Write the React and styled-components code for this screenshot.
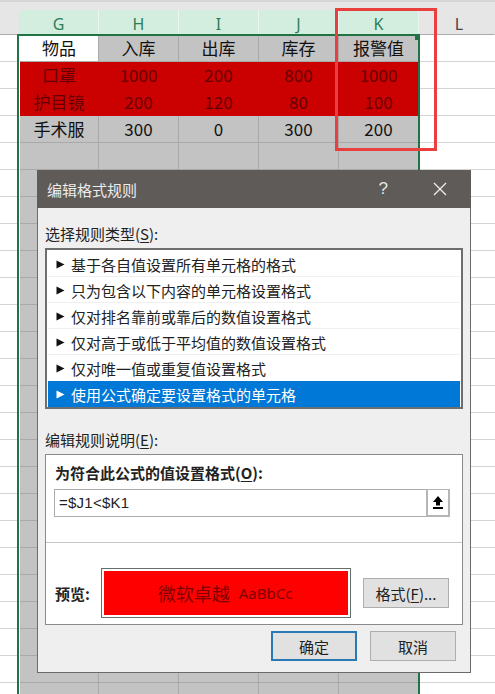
import React from 'react';
import styled, { createGlobalStyle } from 'styled-components';

const Global = createGlobalStyle`
  html, body { margin: 0; padding: 0; background: #fff; overflow: hidden; }
  #root { width: 495px; height: 694px; }
  * { box-sizing: border-box; }
`;
const FONT = `"Noto Sans CJK SC", "Noto Sans", sans-serif`;

const Page = styled.div`
  position: relative; width: 495px; height: 694px; overflow: hidden;
  font-family: ${FONT}; color: #111; background: #fff;
`;
const Sheet = styled.div`
  display: grid;
  grid-template-columns: 19px repeat(5, 80px) 1fr;
  grid-template-rows: 10px 25px;
  grid-auto-rows: 27px;
`;
const TopStrip = styled.div`
  grid-column: 1 / -1; background: #e6e6e6; border-top: 2px solid #d6d6d6;
`;
const HeaderCell = styled.div`
  display: flex; align-items: center; justify-content: center;
  padding-top: 3px; padding-left: ${p => (p.$last ? '5px' : '0')};
  font: 16px / 1 "Noto Sans", sans-serif;
  color: ${p => (p.$on ? '#2f7d56' : '#444')};
  background: ${p => (p.$on ? '#d3eedf' : '#e6e6e6')};
  border-bottom: 1px solid ${p => (p.$on ? '#217346' : '#ababab')};
  border-right: 1px solid ${p => (p.$on ? '#eaf5ef' : '#e6e6e6')};
`;
const Gutter = styled.div`
  background: #fff; border-bottom: 1px solid #d4d4d4;
`;
const Cell = styled.div`
  display: flex; align-items: center; justify-content: center;
  font-size: 17px; line-height: 1; padding-bottom: 2px;
  color: ${p => (p.$alert ? '#660000' : '#111')};
  background: ${p => (p.$alert ? '#cb0000' : p.$active ? '#fff' : '#c3c3c3')};
  border-right: 1px solid ${p => (p.$alert ? '#cb0000' : '#a9a9a9')};
  border-bottom: 1px solid ${p => (p.$alert ? '#cb0000' : '#a9a9a9')};
  ${p => p.$first && 'margin-left: 1px;'}
`;
const Blank = styled.div`
  background: #fff; border-bottom: 1px solid #d4d4d4;
`;

const Selection = styled.div`
  position: absolute; left: 17px; top: 34px; width: 403px; height: 680px;
  border: 2px solid #217346; pointer-events: none;
`;
const Handle = styled.div`
  position: absolute; right: -2px; top: -1px; width: 5px; height: 5px;
  background: #217346; border: 1px solid #217346;
`;
const Callout = styled.div`
  position: absolute; left: 335px; top: 8px; width: 102px; height: 143px;
  border: 3px solid #e9403f; pointer-events: none;
`;

const Dialog = styled.section`
  position: absolute; left: 37px; top: 170px; width: 434px; height: 503px;
  background: #efefef; border: 1px solid #6a6a6a; border-top: 0;
  display: flex; flex-direction: column;
`;
const TitleBar = styled.header`
  height: 38px; margin: 0 -1px; background: #5f5b58; color: #ececec;
  display: flex; align-items: center; padding: 0 24px 0 10px; font-size: 15px;
`;
const TitleText = styled.span` flex: 1; `;
const HelpMark = styled.span`
  font: 17px "Liberation Sans", sans-serif; margin-right: 45px; color: #e6e6e6;
`;
const Body = styled.div`
  display: flex; flex-direction: column; padding: 16px 7px 0;
`;
const Label = styled.div`
  font-size: 15px; line-height: 20px; color: #222; height: 20px;
  u { text-underline-offset: 2px; }
`;
const RuleList = styled.ul`
  list-style: none; margin: 4px 0 0; padding: 1px; width: 418px; height: 161px;
  background: #fff; border: 2px solid #6e6e6e;
`;
const Rule = styled.li`
  height: 26px; display: flex; align-items: center; padding: 1px 0 0 8px; gap: 6px;
  font-size: 15px; color: ${p => (p.$on ? '#fff' : '#222')};
  background: ${p => (p.$on ? '#0078d7' : '#fff')};
  border-bottom: 1px solid ${p => (p.$on ? '#0078d7' : '#f0f0f0')};
  &:nth-child(5) { border-bottom: 0; }
`;
const Arrow = styled.svg` width: 9px; height: 9px; flex: none; `;
const EditLabel = styled(Label)` margin-top: 21px; `;
const Panel = styled.div`
  margin-top: 4px; width: 418px; height: 171px; background: #fff;
  border: 1px solid #8a8a8a; display: flex; flex-direction: column;
`;
const PanelHead = styled.div`
  font-size: 15px; font-weight: 700; line-height: 20px; padding: 8px 0 0 9px; color: #222;
  u { text-underline-offset: 2px; }
`;
const FormulaRow = styled.div`
  margin: 6px 0 0 8px; width: 396px; height: 28px; display: flex;
  border: 1px solid #ababab;
`;
const FormulaText = styled.div`
  flex: 1; font: 15px "Liberation Sans", sans-serif; line-height: 25px; padding-left: 4px;
  color: #222; letter-spacing: 0.25px;
`;
const PickButton = styled.div`
  width: 24px; margin: -1px -1px -1px 0; border: 2px solid #b5b5b5; border-top-width: 1px;
  display: flex; align-items: center; justify-content: center; background: #fff;
`;
const Divider = styled.hr`
  margin: 25px 0 0; border: 0; border-top: 1px solid #c6c6c6; width: 100%;
`;
const PreviewRow = styled.div`
  display: flex; align-items: center; padding: 25px 0 0 9px;
`;
const PreviewLabel = styled.div`
  font-size: 15px; font-weight: 700; width: 46px; flex: none; color: #222;
`;
const PreviewBox = styled.div`
  width: 250px; height: 50px; flex: none; border: 1px solid #63706a; padding: 2px; background: #fff;
`;
const PreviewFill = styled.div`
  height: 100%; background: #ff0000; color: #800000;
  display: flex; align-items: center; justify-content: center; gap: 9px;
  font-size: 18px; padding-right: 2px;
`;
const PreviewLatin = styled.span` font-family: "Noto Sans", sans-serif; font-size: 15px; `;
const Btn = styled.button`
  width: 86px; height: 30px; padding: 0; flex: none; font-family: ${FONT}; font-size: 15px; color: #222;
  background: #e1e1e1; border: ${p => (p.$primary ? '2px solid #2a78b4' : '1px solid #adadad')};
  u { text-underline-offset: 2px; }
`;
const FormatBtn = styled(Btn)` margin-left: 12px; `;
const Footer = styled.div`
  display: flex; justify-content: flex-end; gap: 13px; padding: 6px 7px 0 0; width: 418px; margin-left: 7px;
`;

const cols = ['G', 'H', 'I', 'J', 'K'];
const rows = [
  { v: ['物品', '入库', '出库', '库存', '报警值'] },
  { v: ['口罩', '1000', '200', '800', '1000'], alert: true },
  { v: ['护目镜', '200', '120', '80', '100'], alert: true },
  { v: ['手术服', '300', '0', '300', '200'] },
  ...Array.from({ length: 22 }, () => ({ v: ['', '', '', '', ''] })),
];
const rules = [
  '基于各自值设置所有单元格的格式',
  '只为包含以下内容的单元格设置格式',
  '仅对排名靠前或靠后的数值设置格式',
  '仅对高于或低于平均值的数值设置格式',
  '仅对唯一值或重复值设置格式',
  '使用公式确定要设置格式的单元格',
];

export default function App() {
  return (
    <Page>
      <Global />
      <Sheet>
        <TopStrip />
        <HeaderCell />
        {cols.map(c => <HeaderCell key={c} $on>{c}</HeaderCell>)}
        <HeaderCell $last>L</HeaderCell>
        {rows.map((r, i) => (
          <React.Fragment key={i}>
            <Gutter />
            {r.v.map((t, j) => (
              <Cell key={j} $alert={r.alert} $first={j === 0} $active={i === 0 && j === 0}>{t}</Cell>
            ))}
            <Blank />
          </React.Fragment>
        ))}
      </Sheet>
      <Selection><Handle /></Selection>
      <Callout />
      <Dialog>
        <TitleBar>
          <TitleText>编辑格式规则</TitleText>
          <HelpMark>?</HelpMark>
          <svg width="14" height="14" viewBox="0 0 14 14" aria-hidden="true">
            <path d="M1 1 13 13M13 1 1 13" stroke="#ececec" strokeWidth="1.4" fill="none" />
          </svg>
        </TitleBar>
        <Body>
          <Label>选择规则类型(<u>S</u>):</Label>
          <RuleList>
            {rules.map((t, i) => (
              <Rule key={t} $on={i === 5}>
                <Arrow viewBox="0 0 9 9" aria-hidden="true"><path d="M0.5 0.5 8.5 4.5 0.5 8.5Z" fill={i === 5 ? '#fff' : '#111'} /></Arrow>
                {t}
              </Rule>
            ))}
          </RuleList>
          <EditLabel>编辑规则说明(<u>E</u>):</EditLabel>
          <Panel>
            <PanelHead>为符合此公式的值设置格式(<u>O</u>):</PanelHead>
            <FormulaRow>
              <FormulaText>=$J1&lt;$K1</FormulaText>
              <PickButton>
                <svg width="10" height="13" viewBox="0 0 10 13" aria-hidden="true">
                  <path d="M5 0 10 6H7V9.5H3V6H0Z" fill="#000" />
                  <rect x="0" y="11" width="10" height="2" fill="#000" />
                </svg>
              </PickButton>
            </FormulaRow>
            <Divider />
            <PreviewRow>
              <PreviewLabel>预览:</PreviewLabel>
              <PreviewBox>
                <PreviewFill>微软卓越<PreviewLatin>AaBbCc</PreviewLatin></PreviewFill>
              </PreviewBox>
              <FormatBtn>格式(<u>F</u>)...</FormatBtn>
            </PreviewRow>
          </Panel>
        </Body>
        <Footer>
          <Btn $primary>确定</Btn>
          <Btn>取消</Btn>
        </Footer>
      </Dialog>
    </Page>
  );
}
